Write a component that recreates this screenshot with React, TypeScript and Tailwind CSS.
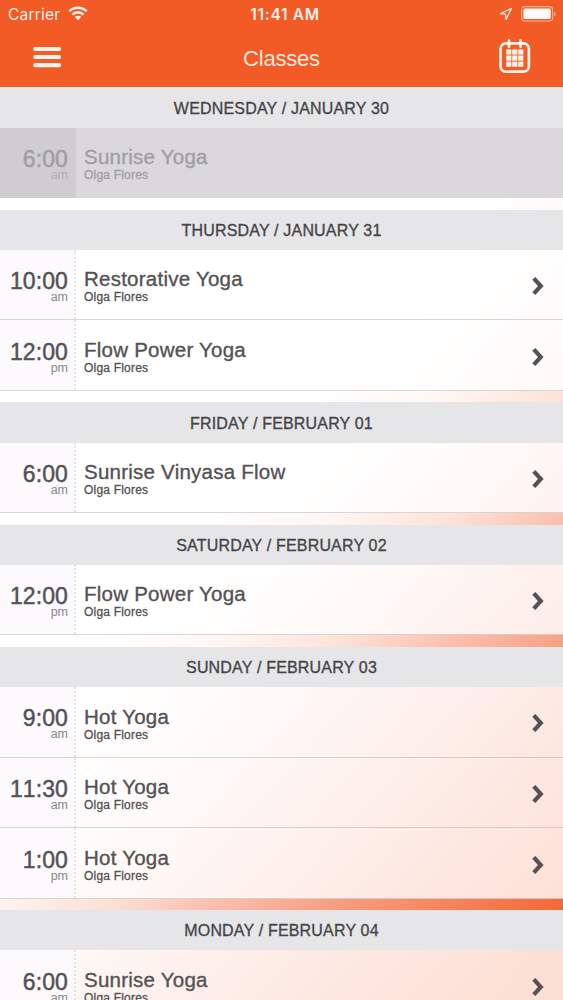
type YogaClass = { time: string; period: string; title: string; teacher: string };
type Day = { label: string; past?: boolean; classes: YogaClass[] };

const teacher = "Olga Flores";

const days: Day[] = [
  { label: "WEDNESDAY / JANUARY 30", past: true, classes: [{ time: "6:00", period: "am", title: "Sunrise Yoga", teacher }] },
  {
    label: "THURSDAY / JANUARY 31",
    classes: [
      { time: "10:00", period: "am", title: "Restorative Yoga", teacher },
      { time: "12:00", period: "pm", title: "Flow Power Yoga", teacher },
    ],
  },
  { label: "FRIDAY / FEBRUARY 01", classes: [{ time: "6:00", period: "am", title: "Sunrise Vinyasa Flow", teacher }] },
  { label: "SATURDAY / FEBRUARY 02", classes: [{ time: "12:00", period: "pm", title: "Flow Power Yoga", teacher }] },
  {
    label: "SUNDAY / FEBRUARY 03",
    classes: [
      { time: "9:00", period: "am", title: "Hot Yoga", teacher },
      { time: "11:30", period: "am", title: "Hot Yoga", teacher },
      { time: "1:00", period: "pm", title: "Hot Yoga", teacher },
    ],
  },
  { label: "MONDAY / FEBRUARY 04", classes: [{ time: "6:00", period: "am", title: "Sunrise Yoga", teacher }] },
];

function StatusBar() {
  return (
    <div className="grid h-[29px] grid-cols-3 items-center pl-2 pr-[7px] font-[Inter,sans-serif] text-[15.5px] text-[#fff0e6]">
      <div className="flex items-center gap-2">
        <span className="tracking-[0.2px]">Carrier</span>
        <svg className="-mt-[2px]" width="20" height="15" viewBox="0 0 20 15" fill="none" stroke="#fff6ee" strokeWidth="2.5">
          <path d="M1.3 5.2a12.4 12.4 0 0 1 17.4 0" />
          <path d="M4.5 8.6a7.8 7.8 0 0 1 11 0" />
          <path d="M10 14.2 6.8 11a4.5 4.5 0 0 1 6.4 0Z" fill="#fff6ee" stroke="none" />
        </svg>
      </div>
      <span className="pl-[6px] text-center font-semibold tracking-[0.7px]">11:41 AM</span>
      <div className="-mt-[2px] flex items-center justify-end gap-[8px]">
        <svg width="14" height="14" viewBox="0 0 14 14" fill="none" stroke="#fff0e6" strokeWidth="1.3" strokeLinejoin="round">
          <path d="M12.4 1.5 1.5 6.6l5 .6.6 5.2Z" />
        </svg>
        <svg width="35" height="16" viewBox="0 0 35 16">
          <rect x="0.6" y="0.6" width="31" height="14.4" rx="3.2" fill="none" stroke="#fbb497" strokeWidth="1.1" />
          <rect x="2.4" y="2.6" width="27.4" height="10.4" rx="1.6" fill="#fffaf5" />
          <path d="M33.2 5.4v5c1-.5 1.5-1.4 1.5-2.5s-.5-2-1.5-2.5Z" fill="#fbb497" />
        </svg>
      </div>
    </div>
  );
}

function CalendarIcon() {
  return (
    <svg width="32" height="35" viewBox="0 0 32 35" fill="none" stroke="#fff3ea">
      <rect x="1.5" y="4.3" width="28.4" height="28.4" rx="5.5" strokeWidth="2.7" />
      <path d="M10 1.4v6.4M21.6 1.4v6.4" strokeWidth="2.7" strokeLinecap="round" />
      <g fill="#fff3ea" stroke="none">
        {[10.4, 16.5, 22.6].map((y) =>
          [7.2, 13.2, 19.2].map((x) => <rect key={`${x}-${y}`} x={x} y={y} width="5.2" height="5.2" />),
        )}
      </g>
    </svg>
  );
}

function NavBar() {
  return (
    <div className="grid h-[58px] grid-cols-3 items-center px-8">
      <svg className="-mt-[2px]" width="30" height="22" viewBox="0 0 30 22" stroke="#fff3ea" strokeWidth="4.2" strokeLinecap="round">
        <path d="M3.3 3h23.8M3.3 11h23.8M3.3 19.2h23.8" />
      </svg>
      <h1 className="pt-[2px] text-center text-[22px] leading-6 tracking-[-0.2px] text-[#ffeade]">Classes</h1>
      <div className="flex justify-end pb-[3px]">
        <CalendarIcon />
      </div>
    </div>
  );
}

function ClassRow({ item, past }: { item: YogaClass; past?: boolean }) {
  return (
    <li
      className={
        past
          ? "flex h-[70.6px] bg-[#dad8db] text-[#a09ea1]"
          : "flex h-[70.6px] border-b border-[#968c91]/35 bg-white/80 text-[#555154]"
      }
    >
      <div
        className={
          past
            ? "flex w-[76px] shrink-0 flex-col items-end bg-[#cfcdd0] pr-2 pt-[19.4px]"
            : "flex w-[76px] shrink-0 flex-col items-end border-r-2 border-dotted border-[#e6e2e7] bg-[#fbf9fd]/80 bg-clip-padding pr-[6px] pt-[19.4px]"
        }
      >
        <span className="text-[23px] leading-6 tracking-[0.1px] [font-kerning:none] [-webkit-text-stroke:0.45px_currentColor]">{item.time}</span>
        <span className={past ? "text-[12.5px] leading-[9px] text-[#b1afb2]" : "text-[12.5px] leading-[9px] text-[#8a878a]"}>
          {item.period}
        </span>
      </div>
      <div className="flex min-w-0 flex-1 flex-col pl-[8px] pt-[17.6px]">
        <span className="text-[20.5px] leading-6 tracking-[0.24px] [-webkit-text-stroke:0.35px_currentColor]">{item.title}</span>
        <span className="text-[12px] leading-[12px] tracking-[0.2px] [-webkit-text-stroke:0.3px_currentColor]">{item.teacher}</span>
      </div>
      {!past && (
        <svg className="mr-[18px] mt-[26.3px] shrink-0" width="14" height="20" viewBox="0 0 14 20" fill="none" stroke="#555154" strokeWidth="4.2">
          <path d="M2.8 2.4 9.8 10l-7 7.6" />
        </svg>
      )}
    </li>
  );
}

export default function App() {
  return (
    <main className="flex h-[1000px] w-full flex-col overflow-hidden bg-[linear-gradient(132.2deg,#ffffff_500px,#fff7f4_590px,#fde2d8_683px,#fbbfae_765px,#f8a084_850px,#f36937_1024px,#f25a26_1088px)] font-['Liberation_Sans',Arial,sans-serif]">
      <header className="h-[87px] shrink-0 bg-[#f25a26]">
        <StatusBar />
        <NavBar />
      </header>
      <div className="flex shrink-0 flex-col gap-[11.3px] pt-[0.4px]">
        {days.map((day) => (
          <section key={day.label}>
            <h2 className="flex h-[40.3px] items-center justify-center bg-[#e6e5e7] pt-[2.4px] text-[16px] tracking-[0.18px] text-[#454346] [-webkit-text-stroke:0.3px_currentColor]">
              {day.label}
            </h2>
            <ul>
              {day.classes.map((item) => (
                <ClassRow key={item.time} item={item} past={day.past} />
              ))}
            </ul>
          </section>
        ))}
      </div>
    </main>
  );
}
